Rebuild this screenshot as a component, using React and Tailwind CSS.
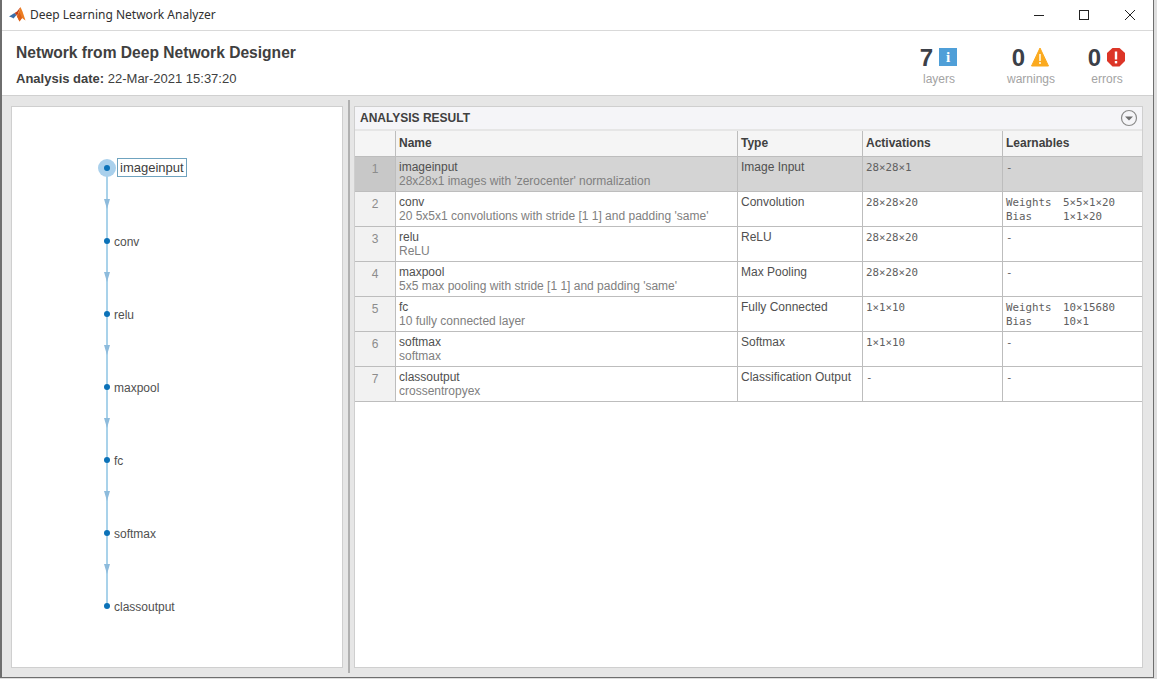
import React from "react";

const layers = [
  { id: 1, name: "imageinput", desc: "28x28x1 images with 'zerocenter' normalization", type: "Image Input", act: "28×28×1", learn: null },
  { id: 2, name: "conv", desc: "20 5x5x1 convolutions with stride [1 1] and padding 'same'", type: "Convolution", act: "28×28×20", learn: [["Weights", "5×5×1×20"], ["Bias", "1×1×20"]] },
  { id: 3, name: "relu", desc: "ReLU", type: "ReLU", act: "28×28×20", learn: null },
  { id: 4, name: "maxpool", desc: "5x5 max pooling with stride [1 1] and padding 'same'", type: "Max Pooling", act: "28×28×20", learn: null },
  { id: 5, name: "fc", desc: "10 fully connected layer", type: "Fully Connected", act: "1×1×10", learn: [["Weights", "10×15680"], ["Bias", "10×1"]] },
  { id: 6, name: "softmax", desc: "softmax", type: "Softmax", act: "1×1×10", learn: null },
  { id: 7, name: "classoutput", desc: "crossentropyex", type: "Classification Output", act: "-", learn: null },
];

const MatlabLogo = () => (
  <svg width="17" height="16" viewBox="0 0 17 16">
    <polygon points="0,9.5 5.5,6 7.5,8 4.5,11.5 3,10.5" fill="#3a6ea8" />
    <polygon points="5.5,6 8,4.5 11.5,0 8,9.5 7.5,8" fill="#c4401a" />
    <polygon points="11.5,0 13.5,4.5 16.5,13.5 13,11 10.5,14.5 8,9.5" fill="#ec7d22" />
    <polygon points="8,9.5 10.5,5 13,11 10.5,14.5" fill="#d9601c" />
  </svg>
);

const InfoIcon = () => (
  <span className="flex h-[18px] w-[18px] items-center justify-center bg-[#4f9fd8] text-[15px] font-bold leading-none text-white font-['Liberation_Serif',serif]">i</span>
);

const WarningIcon = () => (
  <svg width="18" height="20" viewBox="0 0 18 20">
    <polygon points="9,1 17.5,19 0.5,19" fill="#fbaa1f" stroke="#fbaa1f" strokeLinejoin="round" />
    <rect x="8" y="7" width="2" height="7" fill="#ffe9bd" />
    <rect x="8" y="15" width="2" height="2" fill="#ffe9bd" />
  </svg>
);

const ErrorIcon = () => (
  <svg width="18" height="20" viewBox="0 0 18 20">
    <polygon points="5.5,1 12.5,1 18,6 18,14 12.5,19.5 5.5,19.5 0,14 0,6" fill="#dc3527" />
    <rect x="7.8" y="4.5" width="2.4" height="8" fill="#fff" />
    <rect x="7.8" y="14" width="2.4" height="2.4" fill="#fff" />
  </svg>
);

const Stat = ({ value, label, icon, width }) => (
  <div className={`flex flex-col items-center ${width}`}>
    <div className="mr-[1px] flex h-[28px] items-center gap-[6px]">
      <span className="relative top-[1px] text-[24px] font-bold leading-none text-[#3c4048]">{value}</span>
      {icon}
    </div>
    <span className="mt-[1px] text-[12px] leading-[14px] text-[#a3a3a3]">{label}</span>
  </div>
);

// arrow + connector between two graph nodes
const GraphLink = () => (
  <svg width="10" height="73" viewBox="0 0 10 73" className="absolute left-[-5px] top-0">
    <line x1="5" y1="0" x2="5" y2="73" stroke="#a9d2ea" strokeWidth="2" />
    <polygon points="2,31 8,31 5,41" fill="#8dbbdc" />
  </svg>
);

const GraphNode = ({ name, selected, last }) => (
  <div className="relative h-[73px]">
    {!last && <GraphLink />}
    {selected && <div className="absolute left-[-9px] top-[-9px] h-[18px] w-[18px] rounded-full bg-[#a9d0ec]" />}
    <div className="absolute left-[-3px] top-[-3px] h-[6px] w-[6px] rounded-full bg-[#0b72b8]" />
    {selected ? (
      <span className="absolute left-[10px] top-[-10px] border border-[#6fa3bf] bg-white px-[2px] text-[13px] leading-[17px] text-[#404040]">{name}</span>
    ) : (
      <span className="absolute left-[7px] top-[-6px] text-[12px] leading-[14px] text-[#505050]">{name}</span>
    )}
  </div>
);

const LayerRow = ({ layer }) => {
  const selected = layer.id === 1;
  return (
    <div className={`grid h-[35px] grid-cols-[41px_342px_125px_140px_1fr] border-b border-[#bdbdbd] ${selected ? "bg-[#d4d4d4]" : "bg-white"}`}>
      <div className={`border-r border-[#bdbdbd] pt-[5px] text-center text-[12px] leading-[14px] text-[#8c8c8c] ${selected ? "bg-[#c8c8c8]" : "bg-[#f2f2f2]"}`}>{layer.id}</div>
      <div className="border-r border-[#bdbdbd] pl-[3px] pt-[3px] text-[12px] leading-[14px]">
        <div className="text-[#505050]">{layer.name}</div>
        <div className="text-[#808080]">{layer.desc}</div>
      </div>
      <div className="border-r border-[#bdbdbd] pl-[3px] pt-[3px] text-[12px] leading-[14px] text-[#505050]">{layer.type}</div>
      <div className="border-r border-[#bdbdbd] pl-[3px] pt-[4px] font-['DejaVu_Sans_Mono',monospace] text-[10.8px] leading-[14px] text-[#606060]">{layer.act}</div>
      <div className="pl-[3px] pt-[4px] font-['DejaVu_Sans_Mono',monospace] text-[10.8px] leading-[14px] text-[#606060]">
        {layer.learn ? (
          layer.learn.map(([k, v]) => (
            <div key={k} className="flex">
              <span className="w-[57px]">{k}</span>
              <span>{v}</span>
            </div>
          ))
        ) : (
          "-"
        )}
      </div>
    </div>
  );
};

export default function App() {
  return (
    <div className="h-[679px] w-[1157px] overflow-hidden bg-[#dedede] font-['Liberation_Sans',Arial,sans-serif]">
      <div className="flex h-[678px] w-[1154px] flex-col border-b border-l-2 border-r border-[#6e6e6e] bg-[#e6e6e6]">
        {/* Title bar */}
        <div className="flex h-[31px] shrink-0 items-center border-b border-[#d9d9d9] bg-white pl-[7px]">
          <MatlabLogo />
          <span className="ml-[4px] font-['Noto_Sans',sans-serif] text-[12px] text-[#303030]">Deep Learning Network Analyzer</span>
          <div className="ml-auto flex items-center pr-[17px]">
            <svg width="12" height="12" viewBox="0 0 12 12"><line x1="1" y1="6.5" x2="11" y2="6.5" stroke="#222" /></svg>
            <svg width="12" height="12" viewBox="0 0 12 12" className="ml-[33px]"><rect x="1.5" y="1.5" width="9" height="9" fill="none" stroke="#222" /></svg>
            <svg width="12" height="12" viewBox="0 0 12 12" className="ml-[34px]"><path d="M1 1L11 11M11 1L1 11" stroke="#222" /></svg>
          </div>
        </div>

        {/* Header */}
        <div className="flex h-[65px] shrink-0 items-start justify-between border-b border-[#d0d0d0] bg-white pl-[14px] pr-[8px]">
          <div className="pt-[12px]">
            <h1 className="text-[15.6px] font-bold leading-[20px] text-[#404040]">Network from Deep Network Designer</h1>
            <p className="mt-[9px] text-[13px] leading-[14px] text-[#404040]">
              <span className="font-bold">Analysis date:</span> 22-Mar-2021 15:37:20
            </p>
          </div>
          <div className="flex pt-[12px]">
            <Stat value="7" label="layers" icon={<InfoIcon />} width="w-[108px]" />
            <Stat value="0" label="warnings" icon={<WarningIcon />} width="w-[76px]" />
            <Stat value="0" label="errors" icon={<ErrorIcon />} width="w-[76px]" />
          </div>
        </div>

        {/* Body */}
        <div className="flex min-h-0 flex-1 pb-[9px] pl-[9px] pr-[10px] pt-[10px]">
          <div className="w-[332px] shrink-0 border border-[#cfcfcf] bg-white pl-[95px] pt-[61px]">
            {layers.map((l, i) => (
              <GraphNode key={l.id} name={l.name} selected={i === 0} last={i === layers.length - 1} />
            ))}
          </div>

          {/* Divider */}
          <div className="mb-[-5px] ml-[5px] mr-[4px] mt-[-6px] w-[2px] bg-[#b0b0b0]" />

          <div className="flex min-w-0 flex-1 flex-col border border-[#cfcfcf] bg-white">
            <div className="flex h-[24px] shrink-0 items-center justify-between border-b-2 border-[#e6e6e6] bg-[#f5f5f8] pl-[5px] pr-[4px]">
              <span className="text-[12px] font-bold text-[#404040]">ANALYSIS RESULT</span>
              <svg width="18" height="18" viewBox="0 0 18 18">
                <circle cx="9" cy="9" r="7.5" fill="none" stroke="#8a8a8a" strokeWidth="1.2" />
                <polygon points="5,7.5 13,7.5 9,11.5" fill="#6e6e6e" />
              </svg>
            </div>
            <div className="grid h-[26px] shrink-0 grid-cols-[41px_342px_125px_140px_1fr] border-b border-[#bdbdbd] bg-[#f5f5f5] text-[12px] font-bold leading-[14px] text-[#404040]">
              <div className="border-r border-[#bdbdbd]" />
              <div className="border-r border-[#bdbdbd] pl-[3px] pt-[5px]">Name</div>
              <div className="border-r border-[#bdbdbd] pl-[3px] pt-[5px]">Type</div>
              <div className="border-r border-[#bdbdbd] pl-[3px] pt-[5px]">Activations</div>
              <div className="pl-[3px] pt-[5px]">Learnables</div>
            </div>
            {layers.map((l) => (
              <LayerRow key={l.id} layer={l} />
            ))}
          </div>
        </div>
      </div>
    </div>
  );
}
